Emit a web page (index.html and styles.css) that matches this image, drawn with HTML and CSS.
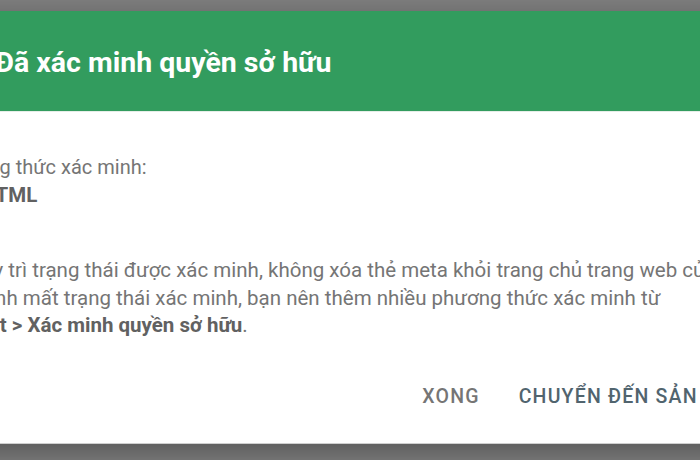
FILE: index.html
```html
<!DOCTYPE html>
<html lang="vi">

<head>
  <meta charset="UTF-8">
  <title>Đã xác minh quyền sở hữu</title>
  <link rel="stylesheet" href="styles.css">
</head>

<body>
  <div class="dialog">
    <div class="dialog-header">
      <h1 class="dialog-title">Đã xác minh quyền sở hữu</h1>
    </div>
    <div class="dialog-body">
      <p class="method-label">Phương thức xác minh:</p>
      <p class="method-name">Thẻ HTML</p>
      <p class="note">Để duy trì trạng thái được xác minh, không xóa thẻ meta khỏi trang chủ trang web của bạn.<br>Để tránh mất trạng thái xác minh, bạn nên thêm nhiều phương thức xác minh từ <b>Cài đặt &gt; Xác minh quyền sở hữu</b>.</p>
    </div>
    <div class="dialog-actions">
      <button class="btn">XONG</button>
      <button class="btn btn_primary">CHUYỂN ĐẾN SẢN PHẨM</button>
    </div>
  </div>
</body>

</html>
```

FILE: styles.css
```css
* {
  margin: 0;
  padding: 0;
}

body {
  height: 460px;
  overflow: hidden;
  background-color: #808080;
  font-family: Roboto, "Noto Sans", sans-serif;
}

.dialog {
  width: 900px;
  margin: 11px 0 0 -82px;
  background-color: #fff;
  border-bottom: 1px solid #cfcfcf;
  box-shadow: 0 8px 30px rgba(0, 0, 0, 0.35);
}

.dialog-header {
  display: flex;
  align-items: center;
  height: 101px;
  box-sizing: border-box;
  padding: 2px 24px 0 77px;
  background-color: #329c5e;
  border-bottom: 1px solid #e6eee8;
}

.dialog-title {
  font-size: 28.5px;
  font-weight: 700;
  color: #fff;
}

.dialog-body {
  padding: 42px 24px 0 23px;
  font-size: 20.5px;
  line-height: 27.5px;
  color: #757575;
}

.dialog-body .method-label {
  font-size: 20px;
}

.dialog-body .method-name {
  font-weight: 700;
  color: #616161;
}

.dialog-body .note {
  margin-top: 48px;
}

.dialog-body .note b {
  white-space: nowrap;
  color: #616161;
}

.dialog-actions {
  display: flex;
  justify-content: flex-end;
  gap: 19px;
  padding: 34px 43px 24px 24px;
}

.btn {
  height: 45px;
  padding: 0 10px;
  border: none;
  background: none;
  font-family: inherit;
  font-size: 19.5px;
  font-weight: 500;
  letter-spacing: 1.2px;
  color: #757575;
  cursor: pointer;
}

.btn_primary {
  color: #51646e;
}
```
